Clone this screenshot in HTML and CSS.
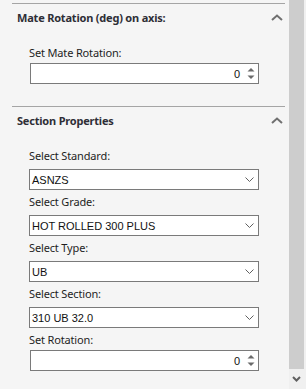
FILE: index.html
```html
<!DOCTYPE html>
<html lang="en">
<head>
    <meta charset="UTF-8">
    <meta name="viewport" content="width=device-width, initial-scale=1.0">
    <title>Properties</title>
    <link rel="stylesheet" href="styles.css">
</head>
<body>
<div class="window">
    <div class="panel">
        <!-- Mate rotation group -->
        <div class="group">
            <div class="group-head">
                <span class="group-title">Mate Rotation (deg) on axis:</span>
                <svg class="collapse" width="12" height="7" viewBox="0 0 12 7"><path d="M1 6 L6 1.5 L11 6" fill="none" stroke="#707070" stroke-width="2"/></svg>
            </div>
            <div class="field first indent">
                <div class="label">Set Mate Rotation:</div>
                <div class="spin">
                    <span class="value">0</span>
                    <span class="arrows">
                        <svg width="8" height="5" viewBox="0 0 8 5"><path d="M0.5 4.5 L4 1 L7.5 4.5 Z" fill="#6a6a6a"/></svg>
                        <svg width="8" height="5" viewBox="0 0 8 5"><path d="M0.5 0.5 L4 4 L7.5 0.5 Z" fill="#6a6a6a"/></svg>
                    </span>
                </div>
            </div>
        </div>

        <!-- Section properties group -->
        <div class="group">
            <div class="group-head">
                <span class="group-title">Section Properties</span>
                <svg class="collapse" width="12" height="7" viewBox="0 0 12 7"><path d="M1 6 L6 1.5 L11 6" fill="none" stroke="#707070" stroke-width="2"/></svg>
            </div>
            <div class="field first">
                <div class="label">Select Standard:</div>
                <div class="combo"><span>ASNZS</span><svg width="9" height="5" viewBox="0 0 9 5"><path d="M0.5 0.5 L4.5 4.5 L8.5 0.5" fill="none" stroke="#606060" stroke-width="1"/></svg></div>
            </div>
            <div class="field">
                <div class="label">Select Grade:</div>
                <div class="combo"><span>HOT ROLLED 300 PLUS</span><svg width="9" height="5" viewBox="0 0 9 5"><path d="M0.5 0.5 L4.5 4.5 L8.5 0.5" fill="none" stroke="#606060" stroke-width="1"/></svg></div>
            </div>
            <div class="field">
                <div class="label">Select Type:</div>
                <div class="combo"><span>UB</span><svg width="9" height="5" viewBox="0 0 9 5"><path d="M0.5 0.5 L4.5 4.5 L8.5 0.5" fill="none" stroke="#606060" stroke-width="1"/></svg></div>
            </div>
            <div class="field">
                <div class="label">Select Section:</div>
                <div class="combo"><span>310 UB 32.0</span><svg width="9" height="5" viewBox="0 0 9 5"><path d="M0.5 0.5 L4.5 4.5 L8.5 0.5" fill="none" stroke="#606060" stroke-width="1"/></svg></div>
            </div>
            <div class="field indent">
                <div class="label">Set Rotation:</div>
                <div class="spin">
                    <span class="value">0</span>
                    <span class="arrows">
                        <svg width="8" height="5" viewBox="0 0 8 5"><path d="M0.5 4.5 L4 1 L7.5 4.5 Z" fill="#6a6a6a"/></svg>
                        <svg width="8" height="5" viewBox="0 0 8 5"><path d="M0.5 0.5 L4 4 L7.5 0.5 Z" fill="#6a6a6a"/></svg>
                    </span>
                </div>
            </div>
        </div>
    </div>

    <!-- Scrollbar -->
    <div class="scrollbar">
        <div class="thumb"></div>
        <div class="scroll-down">
            <svg width="9" height="6" viewBox="0 0 9 6"><path d="M1 1 L4.5 4.5 L8 1" fill="none" stroke="#606060" stroke-width="2"/></svg>
        </div>
    </div>
</div>
</body>
</html>
```

FILE: styles.css
```css
body {
    margin: 0;
    padding: 0;
    background-color: #f5f5f5;
    font-family: "Noto Sans", "Open Sans", sans-serif;
    font-size: 11px;
    color: #222;
}
.window {
    display: flex;
    height: 389px;
    overflow: hidden;
}
.panel {
    flex: 1;
    padding: 3px 4px 0 12px;
}
.group {
    border-top: 1px solid #a5a5a5;
    padding-bottom: 18px;
}
.group-head {
    display: flex;
    align-items: center;
    justify-content: space-between;
    padding: 6px 2px 0 5px;
    height: 16px;
    line-height: 16px;
}
.group-title {
    font-weight: bold;
    color: #2e2e36;
    letter-spacing: -0.2px;
}
.collapse {
    margin-top: -1px;
}
.field {
    padding: 0 26px 4px 17px;
}
.field.first {
    padding-top: 19px;
}
.field.indent .spin {
    margin-left: 1px;
}
.label {
    line-height: 16px;
    height: 16px;
    color: #1e1e1e;
    letter-spacing: -0.15px;
    margin-bottom: 5px;
}
.field.indent .label {
    margin-bottom: 2px;
}
.combo,
.spin {
    display: flex;
    align-items: center;
    height: 19px;
    background-color: #fff;
    border: 1px solid #7a7a7a;
    font-family: "Liberation Sans", Arial, sans-serif;
    font-size: 11px;
    color: #111;
}
.combo span {
    flex: 1;
    padding-left: 2px;
}
.combo svg {
    margin-right: 4px;
}
.spin {
    justify-content: flex-end;
}
.spin .value {
    margin-right: 7px;
}
.arrows {
    display: flex;
    flex-direction: column;
    gap: 3px;
    margin-right: 3px;
}
.arrows svg {
    display: block;
}
.scrollbar {
    width: 17px;
    display: flex;
    flex-direction: column;
    background-color: #f0f0f0;
}
.thumb {
    flex: 1;
    width: 15px;
    background-color: #cdcdcd;
}
.scroll-down {
    height: 20px;
    display: flex;
    align-items: center;
    justify-content: center;
    padding-right: 2px;
}
```
